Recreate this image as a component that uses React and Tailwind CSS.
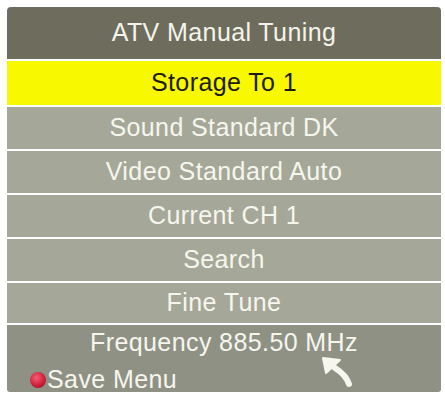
export default function App() {
  const rows = ["Sound Standard DK", "Video Standard Auto", "Current CH 1", "Search"];
  return (
    <div className="w-[445px] h-[399px] bg-white pt-[7px] pl-[7px]" style={{ fontFamily: '"Liberation Sans", Arial, sans-serif' }}>
      <div className="w-[434px] flex flex-col gap-[2px] text-[25px] tracking-[0.4px]">
        <div className="h-[52px] bg-[#6e6d5d] rounded-t-[4px] flex items-center justify-center text-[#f4f4ec]">
          ATV Manual Tuning
        </div>
        <div className="h-[44px] bg-[#f8f800] flex items-center justify-center text-[#1c1c10]">
          Storage To 1
        </div>
        {rows.map((r) => (
          <div key={r} className="h-[42px] bg-[#a5a898] flex items-center justify-center text-[#f6f6ee]">
            {r}
          </div>
        ))}
        <div className="h-[40px] bg-[#a5a898] flex items-center justify-center text-[#f6f6ee]">
          Fine Tune
        </div>
        <div className="h-[67px] bg-[#8f9185] rounded-b-[3px] flex flex-col text-[#f6f6ee]">
          <div className="h-[36px] flex items-center justify-center">Frequency 885.50 MHz</div>
          <div className="flex items-center pl-[23px] relative">
            <span className="w-[16px] h-[16px] rounded-full bg-[radial-gradient(circle_at_40%_35%,#f26070,#d0203a_55%,#7a1020)] mr-[1px]" />
            <span>Save Menu</span>
            <svg className="absolute left-[313px] top-[-5px]" width="34" height="32" viewBox="0 0 34 32">
              <path d="M29 28 C27 22 23 17 15 12" stroke="#f6f6ee" strokeWidth="6" fill="none" strokeLinecap="round" />
              <path d="M3 2 L20 4 L6 17 Z" fill="#f6f6ee" stroke="#f6f6ee" strokeWidth="2" strokeLinejoin="round" />
            </svg>
          </div>
        </div>
      </div>
    </div>
  );
}
